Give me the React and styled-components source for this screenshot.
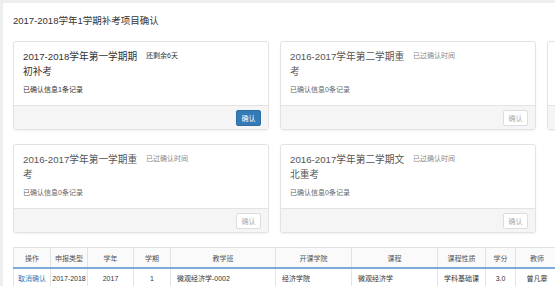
import React from "react";
import styled, { createGlobalStyle } from "styled-components";

const GlobalStyle = createGlobalStyle`
  html, body {
    margin: 0;
    padding: 0;
    background: #eeeeee;
    overflow: hidden;
  }
  body {
    font-family: "Liberation Sans", "Noto Sans CJK SC", sans-serif;
    color: #333;
  }
`;

// 흰색 본문 패널
const Panel = styled.div`
  margin: 3px 0 0 3px;
  background: #fff;
  padding: 12px 0 0 10px;
  width: 800px;
  height: 300px;
  box-sizing: border-box;
`;

const PageTitle = styled.div`
  font-size: 9.5px;
  line-height: 12px;
  color: #333;
  margin-bottom: 14px;
`;

const CardGrid = styled.div`
  display: grid;
  grid-template-columns: repeat(3, 256px);
  column-gap: 11px;
  row-gap: 14px;
`;

const Card = styled.div`
  border: 1px solid #e3e3e3;
  border-radius: 3px;
  box-shadow: 0 1px 2px rgba(0, 0, 0, 0.06);
  background: #fff;
  display: flex;
  flex-direction: column;
  height: 89px;
  box-sizing: border-box;
`;

const CardBody = styled.div`
  flex: 1;
  padding: 7px 9px 0 9px;
`;

const TitleRow = styled.div`
  display: flex;
  align-items: flex-start;
`;

const CardTitle = styled.div`
  width: 115px;
  font-size: 9.7px;
  line-height: 15px;
  color: ${(p) => (p.active ? "#333" : "#555")};
`;

const Status = styled.div`
  margin-left: 8px;
  margin-top: 1px;
  font-size: 7px;
  line-height: 12px;
  color: ${(p) => (p.active ? "#333" : "#888")};
`;

const Info = styled.div`
  margin-top: 5px;
  font-size: 7px;
  line-height: 12px;
  color: ${(p) => (p.active ? "#333" : "#666")};
`;

const CardFooter = styled.div`
  height: 24px;
  background: #f5f5f5;
  border-top: 1px solid #e3e3e3;
  display: flex;
  justify-content: flex-end;
  align-items: center;
  padding-right: 7px;
  box-sizing: border-box;
`;

const ConfirmButton = styled.button`
  width: 25px;
  height: 16px;
  padding: 0;
  font-family: inherit;
  font-size: 7px;
  border-radius: 2px;
  border: 1px solid ${(p) => (p.disabled ? "#ddd" : "#2e6da4")};
  background: ${(p) => (p.disabled ? "#fff" : "#337ab7")};
  color: ${(p) => (p.disabled ? "#aaa" : "#fff")};
`;

const Table = styled.table`
  margin-top: 14px;
  border-collapse: collapse;
  table-layout: fixed;
  width: 545px;
  font-size: 7px;
`;

const Th = styled.th`
  height: 19px;
  font-weight: normal;
  color: #555;
  background: #fafafa;
  border: 1px solid #e3e3e3;
  border-bottom: 2px solid #7fa9d6;
  padding: 0;
  text-align: center;
`;

const Td = styled.td`
  height: 18px;
  color: #333;
  border: 1px solid #e3e3e3;
  padding: 0 ${(p) => (p.left ? "6px" : "0")};
  text-align: ${(p) => (p.left ? "left" : "center")};
  white-space: nowrap;
  overflow: hidden;
`;

const LinkText = styled.a`
  color: #337ab7;
  text-decoration: none;
`;

const cards = [
  { title: "2017-2018学年第一学期期初补考", status: "还剩余6天", count: 1, active: true },
  { title: "2016-2017学年第二学期重考", status: "已过确认时间", count: 0 },
  { title: "", status: "", count: 0, hidden: true },
  { title: "2016-2017学年第一学期重考", status: "已过确认时间", count: 0 },
  { title: "2016-2017学年第二学期文北重考", status: "已过确认时间", count: 0 },
];

const columns = [
  ["操作", 37],
  ["申报类型", 37],
  ["学年", 46],
  ["学期", 37],
  ["教学班", 105],
  ["开课学院", 76],
  ["课程", 86],
  ["课程性质", 48],
  ["学分", 30],
  ["教师", 43],
];

const App = () => {
  return (
    <>
      <GlobalStyle />
      <Panel>
        <PageTitle>2017-2018学年1学期补考项目确认</PageTitle>
        <CardGrid>
          {cards.map((c, i) => (
            <Card key={i}>
              <CardBody>
                <TitleRow>
                  <CardTitle active={c.active}>{c.title}</CardTitle>
                  <Status active={c.active}>{c.status}</Status>
                </TitleRow>
                {!c.hidden && (
                  <Info active={c.active}>已确认信息{c.count}条记录</Info>
                )}
              </CardBody>
              <CardFooter>
                {!c.hidden && (
                  <ConfirmButton disabled={!c.active}>确认</ConfirmButton>
                )}
              </CardFooter>
            </Card>
          ))}
        </CardGrid>
        <Table>
          <colgroup>
            {columns.map(([name, w]) => (
              <col key={name} style={{ width: w }} />
            ))}
          </colgroup>
          <thead>
            <tr>
              {columns.map(([name]) => (
                <Th key={name}>{name}</Th>
              ))}
            </tr>
          </thead>
          <tbody>
            <tr>
              <Td>
                <LinkText href="#">取消确认</LinkText>
              </Td>
              <Td>2017-2018</Td>
              <Td>2017</Td>
              <Td>1</Td>
              <Td left>微观经济学-0002</Td>
              <Td left>经济学院</Td>
              <Td left>微观经济学</Td>
              <Td>学科基础课</Td>
              <Td>3.0</Td>
              <Td>曾凡寨</Td>
            </tr>
          </tbody>
        </Table>
      </Panel>
    </>
  );
};

export default App;
